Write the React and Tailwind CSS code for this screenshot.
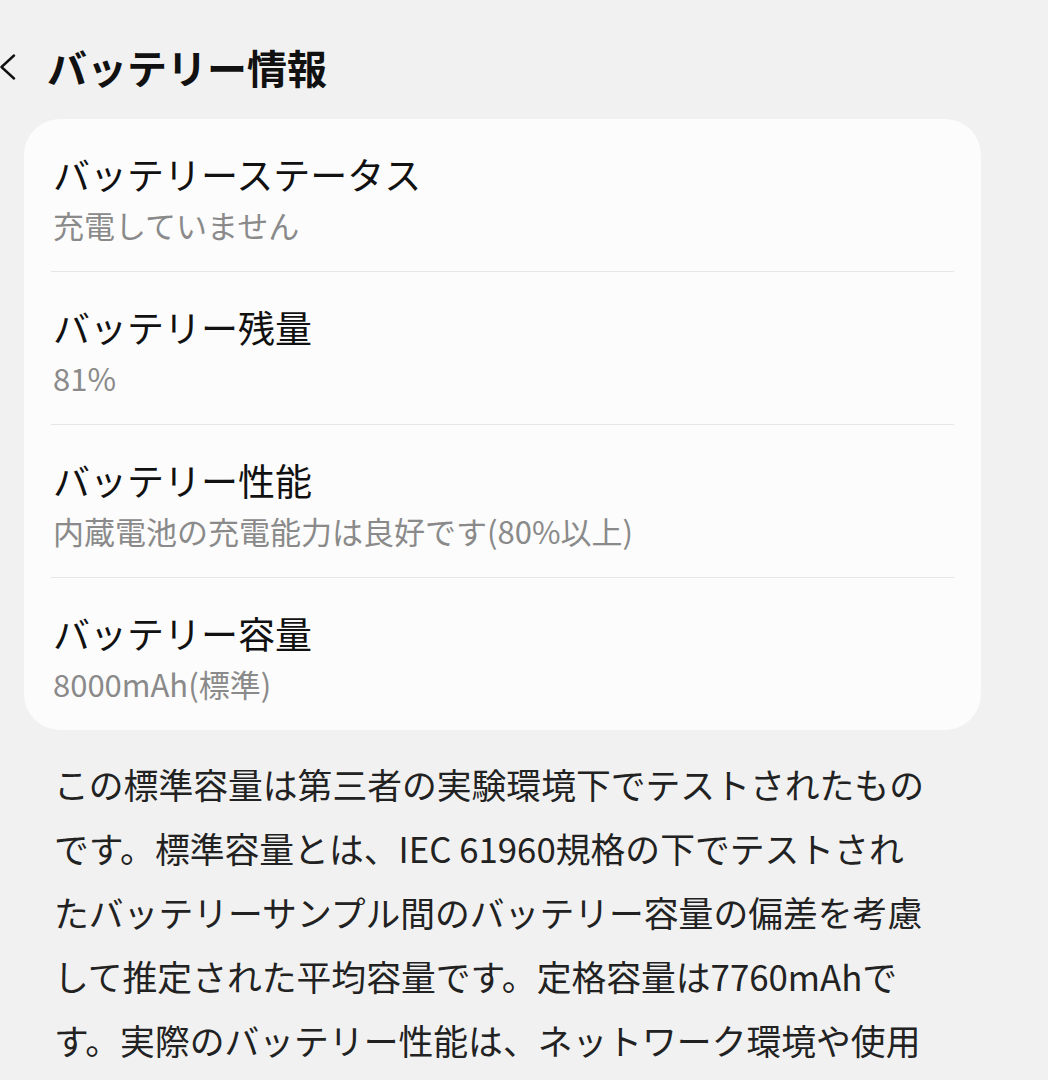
export default function App() {
  const font = { fontFamily: '"Noto Sans CJK JP", "Noto Sans", sans-serif' };
  const rows = [
    ["バッテリーステータス", "充電していません"],
    ["バッテリー残量", "81%"],
    ["バッテリー性能", "内蔵電池の充電能力は良好です(80%以上)"],
    ["バッテリー容量", "8000mAh(標準)"],
  ];
  const para = [
    "この標準容量は第三者の実験環境下でテストされたもの",
    "です。標準容量とは、IEC 61960規格の下でテストされ",
    "たバッテリーサンプル間のバッテリー容量の偏差を考慮",
    "して推定された平均容量です。定格容量は7760mAhで",
    "す。実際のバッテリー性能は、ネットワーク環境や使用",
  ];
  return (
    <div className="w-[1048px] h-[1080px] overflow-hidden bg-[#f1f1f1]" style={font}>
      <div className="flex items-center h-[119px] pt-[15px]">
        <svg className="w-[16px] h-[26px]" viewBox="0 0 16 26" fill="none">
          <path d="M14 1.5 L1.5 13 L14 24.5" stroke="#111" strokeWidth="2.4" strokeLinecap="round" strokeLinejoin="round" />
        </svg>
        <div className="ml-[31px] text-[40px] leading-[52px] font-bold text-[#111]">バッテリー情報</div>
      </div>
      <div className="mx-[24px] w-[957px] rounded-[36px] bg-[#fcfcfc] px-[27px]">
        {rows.map(([t, s], i) => (
          <div key={i} className={"pt-[31px] pb-[19px] " + (i < rows.length - 1 ? "border-b border-[#e6e6e6]" : "")}>
            <div className="pl-[2px] text-[37px] leading-[48px] text-[#111]">{t}</div>
            <div className="pl-[2px] text-[31px] leading-[54px] text-[#8a8a8a]">{s}</div>
          </div>
        ))}
      </div>
      <div className="mt-[22px] pl-[54px] text-[34.8px] leading-[64px] text-[#222]">
        {para.map((l, i) => (
          <div key={i} className="whitespace-nowrap">{l}</div>
        ))}
      </div>
    </div>
  );
}
